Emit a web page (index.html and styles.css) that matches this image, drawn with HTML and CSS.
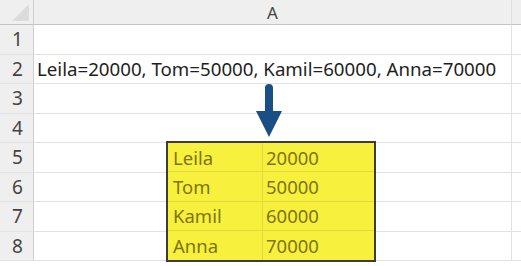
FILE: index.html
```html
<!DOCTYPE html>
<html>
<head>
<meta charset="utf-8">
<link rel="stylesheet" href="styles.css">
</head>
<body>
<div class="sheet">
  <div class="corner"><span class="tri"></span></div>
  <div class="colhead">A</div>
  <div class="colhead rest"></div>

  <div class="rowhead">1</div><div class="cell"></div><div class="cell rest"></div>
  <div class="rowhead">2</div><div class="cell text">Leila=20000, Tom=50000, Kamil=60000, Anna=70000</div><div class="cell rest"></div>
  <div class="rowhead">3</div><div class="cell"></div><div class="cell rest"></div>
  <div class="rowhead">4</div><div class="cell"></div><div class="cell rest"></div>
  <div class="rowhead">5</div><div class="cell"></div><div class="cell rest"></div>
  <div class="rowhead">6</div><div class="cell"></div><div class="cell rest"></div>
  <div class="rowhead">7</div><div class="cell"></div><div class="cell rest"></div>
  <div class="rowhead">8</div><div class="cell"></div><div class="cell rest"></div>

  <svg class="arrow" width="26" height="54" viewBox="0 0 26 54">
    <path d="M13 4 L13 30" stroke="#1a4f86" stroke-width="8" stroke-linecap="round" fill="none"/>
    <path d="M0 27 L26 27 L13 53 Z" fill="#1a4f86"/>
  </svg>

  <div class="result">
    <div class="rc">Leila</div><div class="rc num">20000</div>
    <div class="rc">Tom</div><div class="rc num">50000</div>
    <div class="rc">Kamil</div><div class="rc num">60000</div>
    <div class="rc">Anna</div><div class="rc num">70000</div>
  </div>
</div>
</body>
</html>
```

FILE: styles.css
```css
html, body {
  margin: 0;
  padding: 0;
  background: #ffffff;
}
body {
  width: 521px;
  height: 266px;
  overflow: hidden;
  font-family: "Noto Sans", "Open Sans", sans-serif;
}
.sheet {
  position: relative;
  display: grid;
  grid-template-columns: 34px 478px 1fr;
  grid-template-rows: 25px repeat(8, 29.5px);
  width: 521px;
}
.corner {
  background: #efefef;
  border-right: 1px solid #cfcfcf;
  border-bottom: 1px solid #c4c4c4;
  position: relative;
}
.tri {
  position: absolute;
  right: 4px;
  bottom: 3px;
  width: 0;
  height: 0;
  border-left: 17px solid transparent;
  border-bottom: 17px solid #dcdcdc;
}
.colhead {
  background: #efefef;
  border-bottom: 1px solid #c4c4c4;
  border-right: 1px solid #e0e0e0;
  display: flex;
  align-items: center;
  justify-content: center;
  font-size: 17px;
  color: #444444;
}
.colhead.rest {
  border-right: none;
}
.rowhead {
  background: #efefef;
  border-right: 1px solid #cfcfcf;
  border-bottom: 1px solid #e2e2e2;
  display: flex;
  align-items: center;
  justify-content: center;
  font-size: 19px;
  color: #444444;
  padding-left: 2px;
}
.cell {
  border-bottom: 1px solid #e2e2e2;
  border-right: 1px solid #e2e2e2;
  display: flex;
  align-items: center;
}
.cell.rest {
  border-right: none;
}
.text {
  padding-left: 3px;
  font-size: 18.7px;
  color: #1e1e1e;
  white-space: nowrap;
  overflow: visible;
}
.arrow {
  position: absolute;
  left: 256px;
  top: 84px;
}
.result {
  position: absolute;
  left: 166px;
  top: 141px;
  width: 206px;
  height: 117px;
  border: 2px solid #3c3c3c;
  background: #f7f13e;
  display: grid;
  grid-template-columns: 95px 1fr;
  grid-template-rows: repeat(4, 1fr);
}
.rc {
  display: flex;
  align-items: center;
  padding-left: 5px;
  font-size: 18.5px;
  color: #7f7410;
  border-bottom: 1px solid #e0da3a;
}
.rc.num {
  padding-left: 3px;
}
.rc:nth-child(odd) {
  border-right: 1px solid #e0da3a;
}
.rc:nth-last-child(-n+2) {
  border-bottom: none;
}
```
